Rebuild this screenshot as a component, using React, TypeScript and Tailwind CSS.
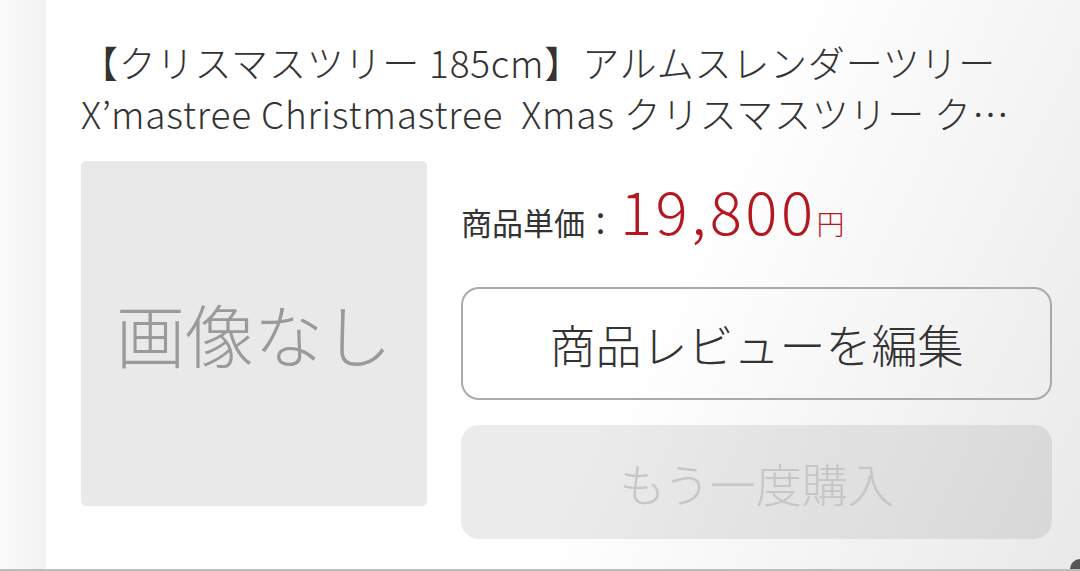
import React from "react"

const jp = { fontFamily: '"Noto Sans CJK JP", "Noto Sans", sans-serif' }

const title =
  "【クリスマスツリー 185cm】アルムスレンダーツリー X’mastree Christmastree  Xmas クリスマスツリー クリスマス ツリー おしゃれ 北欧"

const App = () => {
  return (
    <div
      style={jp}
      className="flex h-[571px] w-[1080px] overflow-hidden bg-white border-b-2 border-[#bdbdbd] font-light"
    >
      {/* left gutter */}
      <div className="w-[46px] shrink-0 bg-gradient-to-r from-[#fbfbfb] to-[#f1f1f1]" />

      <div className="relative flex-1 bg-[linear-gradient(115deg,#ffffff_58%,#e9e9e9_100%)] pl-[35px] pr-[16px] pt-[37px]">
        <p className="line-clamp-2 w-[950px] text-[37px] leading-[51px] tracking-[0.8px] text-[#333] whitespace-pre-wrap">
          {title}
        </p>

        <div className="mt-[22px] flex items-start gap-[34px]">
          {/* image placeholder */}
          <div className="flex h-[345px] w-[346px] shrink-0 items-center justify-center rounded-[5px] bg-[#e9e9e9]">
            <span className="text-[69px] leading-none text-[#9a9a9a]">画像なし</span>
          </div>

          <div className="flex w-[591px] flex-col">
            <div className="mt-[18px] flex h-[60px] items-baseline">
              <span className="text-[31px] leading-none text-[#333] font-normal">商品単価：</span>
              <span className="ml-[4px] text-[60px] leading-none tracking-[3.5px] text-[#b5171e]">19,800</span>
              <span className="text-[28px] leading-none text-[#b5171e]">円</span>
            </div>

            <button className="mt-[48px] flex h-[113px] items-center justify-center rounded-[18px] border-2 border-[#aaaaaa] bg-transparent text-[46px] font-light text-[#333]">
              商品レビューを編集
            </button>

            <button className="mt-[25px] flex h-[114px] items-center justify-center rounded-[18px] bg-black/[0.08] text-[46px] font-light text-[#c6c6c6]">
              もう一度購入
            </button>
          </div>
        </div>

        {/* device corner */}
        <div className="absolute bottom-0 right-0 h-[10px] w-[10px] rounded-tl-full bg-[#555]" />
      </div>
    </div>
  )
}

export default App
